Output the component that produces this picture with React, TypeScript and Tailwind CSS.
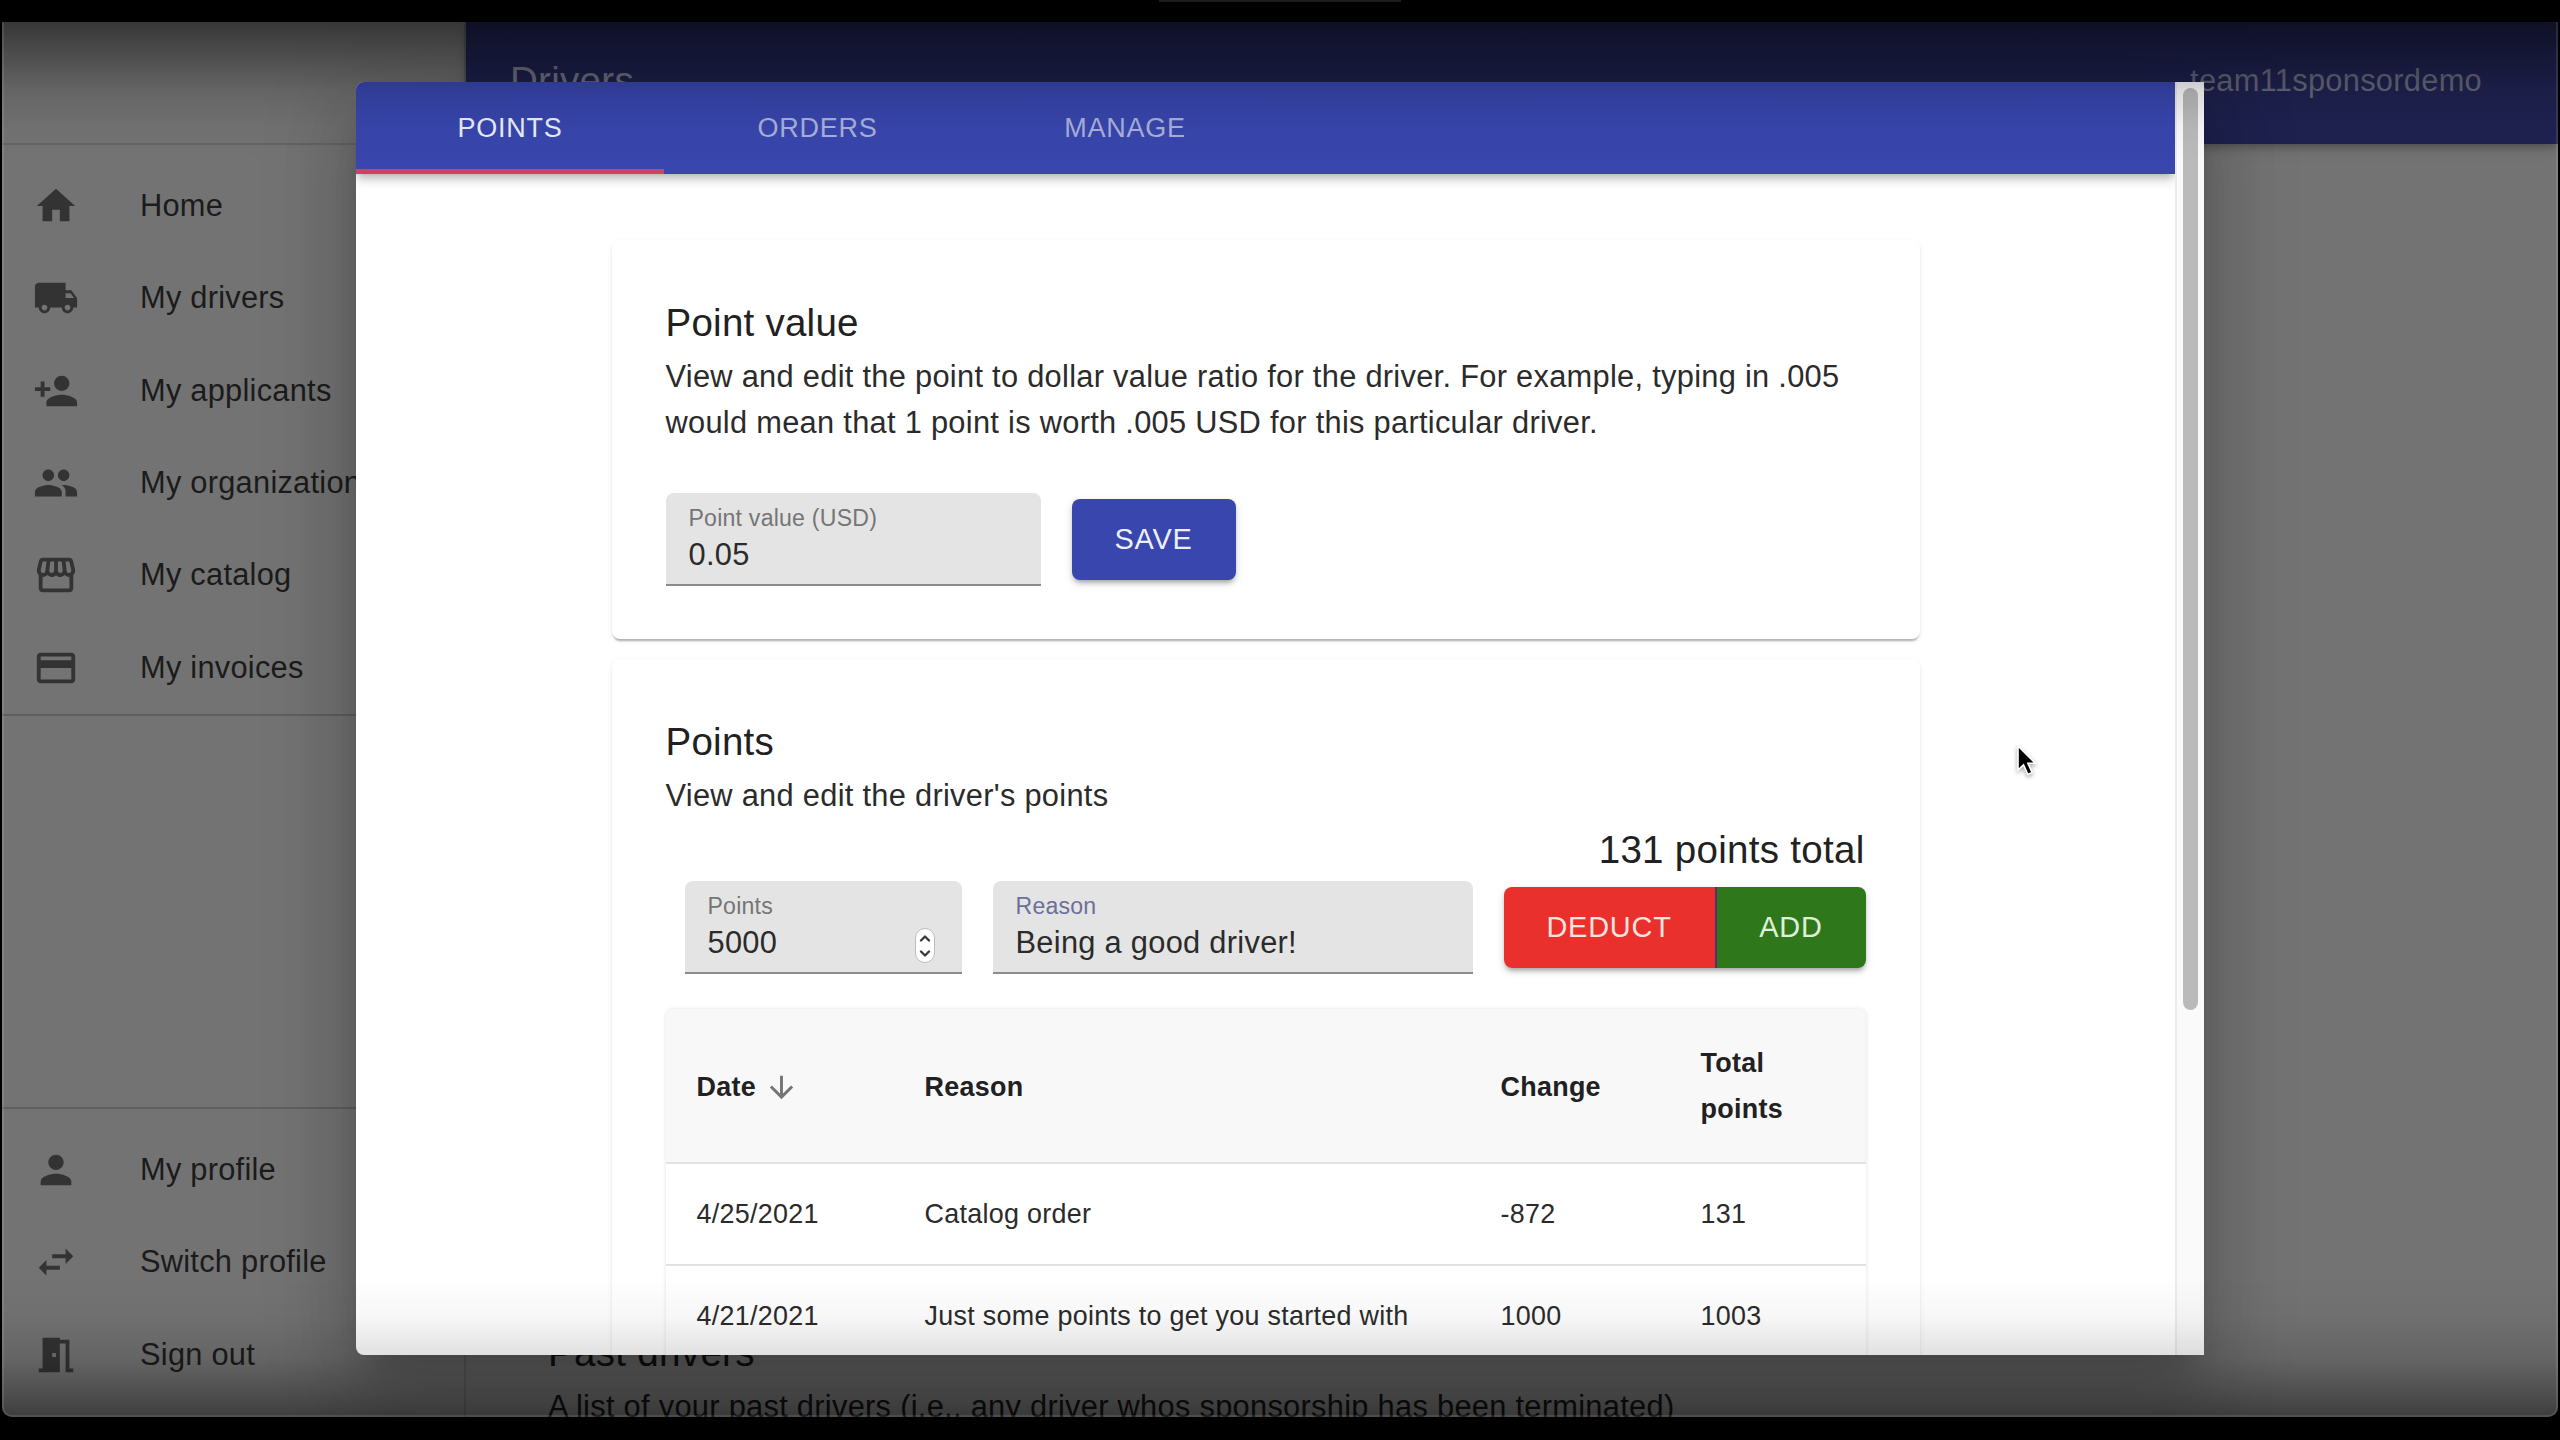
import React from "react";
import type { IconType } from "react-icons";
import {
  MdArrowDownward,
  MdHome,
  MdLocalShipping,
  MdMeetingRoom,
  MdOutlineStorefront,
  MdPayment,
  MdPeople,
  MdPerson,
  MdPersonAdd,
  MdSwapHoriz,
} from "react-icons/md";

const mainNav: [IconType, string][] = [
  [MdHome, "Home"],
  [MdLocalShipping, "My drivers"],
  [MdPersonAdd, "My applicants"],
  [MdPeople, "My organization"],
  [MdOutlineStorefront, "My catalog"],
  [MdPayment, "My invoices"],
];

const accountNav: [IconType, string][] = [
  [MdPerson, "My profile"],
  [MdSwapHoriz, "Switch profile"],
  [MdMeetingRoom, "Sign out"],
];

const rows = [
  ["4/25/2021", "Catalog order", "-872", "131"],
  ["4/21/2021", "Just some points to get you started with", "1000", "1003"],
];

function NavList({ items }: { items: [IconType, string][] }) {
  return (
    <ul>
      {items.map(([Icon, label]) => (
        <li key={label} className="flex h-[92.3px] items-center pl-[31px]">
          <Icon className="size-[46px] shrink-0 text-[#333333]" />
          <span className="ml-[61px] whitespace-nowrap text-[30.8px] tracking-[0.25px] text-[#1b1b1b]">{label}</span>
        </li>
      ))}
    </ul>
  );
}

function Card({ className, children }: { className: string; children: React.ReactNode }) {
  return (
    <section
      className={
        "mx-auto w-[1308px] shrink-0 rounded-[8px] bg-white px-[54px] pt-[52px] shadow-[0_4px_2px_-2px_rgba(0,0,0,0.2),0_2px_2px_0_rgba(0,0,0,0.1),0_2px_6px_0_rgba(0,0,0,0.06)] " +
        className
      }
    >
      {children}
    </section>
  );
}

function Field({
  className,
  label,
  labelClass,
  value,
  children,
}: {
  className: string;
  label: string;
  labelClass: string;
  value: string;
  children?: React.ReactNode;
}) {
  return (
    <div
      className={
        "relative flex h-[93px] flex-col rounded-t-[8px] border-b-2 border-[#8c8c8c] bg-[#e4e4e4] pl-[23px] pt-[10px] " + className
      }
    >
      <span className={"text-[23.1px] leading-[31px] tracking-[0.22px] " + labelClass}>{label}</span>
      <span className="text-[30.8px] leading-[42px] tracking-[0.29px] text-[#2b2b2b]">{value}</span>
      {children}
    </div>
  );
}

export default function App() {
  return (
    <div className="h-[1440px] w-[2560px] overflow-hidden bg-black px-[2px] font-['Liberation_Sans',Arial,sans-serif]">
      <div className="flex h-[22px] justify-center">
        <div className="h-[2px] w-[242px] bg-[#1d1d1b]" />
      </div>
      <div className="relative flex h-[1395px] w-[2556px] overflow-hidden rounded-b-[10px] bg-[#737373]">
        <aside className="flex w-[464px] shrink-0 flex-col border-r-2 border-[#656565]">
          <div className="h-[123px] shrink-0 border-b-2 border-[#646464]" />
          <div className="h-[571px] shrink-0 border-b-2 border-[#5f5f5f] pt-[15px]">
            <NavList items={mainNav} />
          </div>
          <div className="mt-[391px] border-t-2 border-[#5f5f5f] pt-[15px]">
            <NavList items={accountNav} />
          </div>
        </aside>
        <div className="flex min-w-0 flex-1 flex-col">
          <header className="flex h-[122px] shrink-0 justify-between bg-[#1f2250] pl-[44px] pr-[76px] shadow-[0_4px_8px_-2px_rgba(0,0,0,0.3),0_2px_18px_0_rgba(0,0,0,0.1)]">
            <h1 className="pt-[34px] text-[38.5px] leading-[50px] tracking-[0.29px] text-[#75768a]">Drivers</h1>
            <span className="pt-[36px] text-[30.8px] leading-[46px] tracking-[0.29px] text-[#66677a]">team11sponsordemo</span>
          </header>
          <main className="mt-auto pl-[82px] text-[#111111]">
            <h2 className="text-[38.5px] leading-[62px] tracking-[0.29px]">Past drivers</h2>
            <p className="-mb-[13px] whitespace-nowrap text-[30.8px] leading-[46px] tracking-[0.29px]">
              A list of your past drivers (i.e., any driver whos sponsorship has been terminated)
            </p>
          </main>
        </div>

        <div
          role="dialog"
          className="absolute left-[354px] top-[60px] flex h-[1273px] w-[1848px] overflow-hidden rounded-l-[8px] bg-white shadow-[0_21px_29px_-14px_rgba(0,0,0,0.2),0_46px_73px_6px_rgba(0,0,0,0.14),0_17px_89px_15px_rgba(0,0,0,0.12)]"
        >
          <div className="flex min-w-0 flex-1 flex-col overflow-hidden">
            <nav className="flex h-[92px] shrink-0 bg-[#3846ad] text-[27px] leading-[92px] tracking-[0.75px] text-[#aab0db] shadow-[0_4px_8px_-2px_rgba(0,0,0,0.25),0_8px_10px_0_rgba(0,0,0,0.1)]">
              <span className="w-[308px] border-b-[5px] border-[#d04068] text-center text-[#eceefa]">POINTS</span>
              <span className="w-[307px] text-center">ORDERS</span>
              <span className="w-[308px] text-center">MANAGE</span>
            </nav>

            <Card className="mt-[66px] h-[399px]">
              <h2 className="text-[38.5px] leading-[61px] tracking-[0.25px] text-[#212121]">Point value</h2>
              <p className="mt-px whitespace-nowrap text-[30.8px] leading-[46px] tracking-[0.29px] text-[#2b2b2b]">
                View and edit the point to dollar value ratio for the driver. For example, typing in .005
                <br />
                would mean that 1 point is worth .005 USD for this particular driver.
              </p>
              <div className="mt-[47px] flex items-center gap-[31px]">
                <Field className="w-[375px]" label="Point value (USD)" labelClass="text-[#757575]" value="0.05" />
                <button className="h-[81px] w-[164px] rounded-[8px] bg-[#3846ad] text-[28.9px] tracking-[0.8px] text-[#eceefa] shadow-[0_4px_5px_-2px_rgba(0,0,0,0.3),0_3px_8px_0_rgba(0,0,0,0.15)]">
                  SAVE
                </button>
              </div>
            </Card>

            <Card className="mt-[20px] h-[1100px]">
              <h2 className="text-[38.5px] leading-[61px] tracking-[0.25px] text-[#212121]">Points</h2>
              <p className="mt-px text-[30.8px] leading-[46px] tracking-[0.29px] text-[#2b2b2b]">View and edit the driver's points</p>
              <p className="pr-px text-right text-[38.5px] leading-[62px] tracking-[0.29px] text-[#212121]">131 points total</p>
              <div className="flex items-center pl-[19px]">
                <Field className="w-[277px]" label="Points" labelClass="text-[#757575]" value="5000">
                  <span className="absolute bottom-[9px] right-[27px] flex h-[35px] w-[20px] flex-col items-center justify-center rounded-full border border-[#bdbdbd] bg-white">
                    <svg viewBox="0 0 12 24" className="h-[24px] w-[12px]" fill="none" stroke="#3a3a3a" strokeWidth="2.4" strokeLinecap="round" strokeLinejoin="round">
                      <path d="M2 6.5 6 2.5l4 4M2 17.5l4 4 4-4" />
                    </svg>
                  </span>
                </Field>
                <Field className="ml-[31px] w-[480px]" label="Reason" labelClass="text-[#6c6f98]" value="Being a good driver!" />
                <div className="ml-[31px] flex h-[81px] overflow-hidden rounded-[8px] text-[28.9px] tracking-[0.8px] shadow-[0_4px_5px_-2px_rgba(0,0,0,0.3),0_3px_8px_0_rgba(0,0,0,0.15)]">
                  <button className="w-[213px] border-r-2 border-[#5b2f6e] bg-[#ea302c] text-[#fbe3df]">DEDUCT</button>
                  <button className="w-[149px] bg-[#2e781b] text-[#e0efdc]">ADD</button>
                </div>
              </div>

              <table className="mt-[35px] w-[1200px] table-fixed border-separate border-spacing-0 rounded-t-[8px] text-left text-[26.9px] tracking-[0.29px] text-[#2b2b2b] shadow-[0_0_4px_0_rgba(0,0,0,0.12)]">
                <colgroup>
                  <col className="w-[228px]" />
                  <col className="w-[576px]" />
                  <col className="w-[200px]" />
                  <col className="w-[196px]" />
                </colgroup>
                <thead className="leading-[46px] text-[#212121]">
                  <tr className="h-[155px]">
                    <th className="rounded-tl-[8px] border-b-2 border-[#e2e2e2] bg-[#f8f8f8] pl-[31px] pt-[3px]">
                      <span className="flex items-center">
                        Date
                        <MdArrowDownward className="ml-[8px] size-[35px] text-[#757575]" />
                      </span>
                    </th>
                    <th className="border-b-2 border-[#e2e2e2] bg-[#f8f8f8] pl-[31px] pt-[3px]">Reason</th>
                    <th className="border-b-2 border-[#e2e2e2] bg-[#f8f8f8] pl-[31px] pt-[3px]">Change</th>
                    <th className="rounded-tr-[8px] border-b-2 border-[#e2e2e2] bg-[#f8f8f8] pl-[31px] pt-px">
                      Total
                      <br />
                      points
                    </th>
                  </tr>
                </thead>
                <tbody>
                  {rows.map((row) => (
                    <tr key={row[0]} className="h-[102px]">
                      {row.map((cell, i) => (
                        <td key={i} className="whitespace-nowrap border-b-2 border-[#e2e2e2] pl-[31px] pt-px">
                          {cell}
                        </td>
                      ))}
                    </tr>
                  ))}
                </tbody>
              </table>
            </Card>
          </div>

          <div className="w-[29px] shrink-0 border-l-2 border-[#ececec] bg-[#fafafa] pl-[6px] pt-[6px]">
            <div className="h-[922px] w-[15px] rounded-full bg-[#bababa]" />
          </div>
        </div>

        <svg viewBox="0 0 22 34" className="pointer-events-none absolute left-[2014px] top-[722px] h-[34px] w-[22px] drop-shadow-[0_2px_2px_rgba(0,0,0,0.35)]">
          <path d="M2 2v24l5.5-5.2 4.3 9.6 4.3-1.9-4.2-9.3h7.4z" fill="#000" stroke="#fff" strokeWidth="1.6" />
        </svg>

        <div className="pointer-events-none absolute inset-x-0 top-0 h-[140px] bg-[linear-gradient(to_bottom,rgba(0,0,0,0.52),rgba(0,0,0,0.32)_25%,rgba(0,0,0,0.12)_50%,rgba(0,0,0,0.03)_75%,transparent)]" />
        <div className="pointer-events-none absolute inset-x-0 bottom-0 h-[140px] bg-[linear-gradient(to_top,rgba(0,0,0,0.46),rgba(0,0,0,0.28)_22%,rgba(0,0,0,0.12)_43%,rgba(0,0,0,0.03)_72%,transparent)]" />
        <div className="pointer-events-none absolute inset-0 rounded-b-[10px] border-x-2 border-b-2 border-white/10" />
      </div>
    </div>
  );
}
